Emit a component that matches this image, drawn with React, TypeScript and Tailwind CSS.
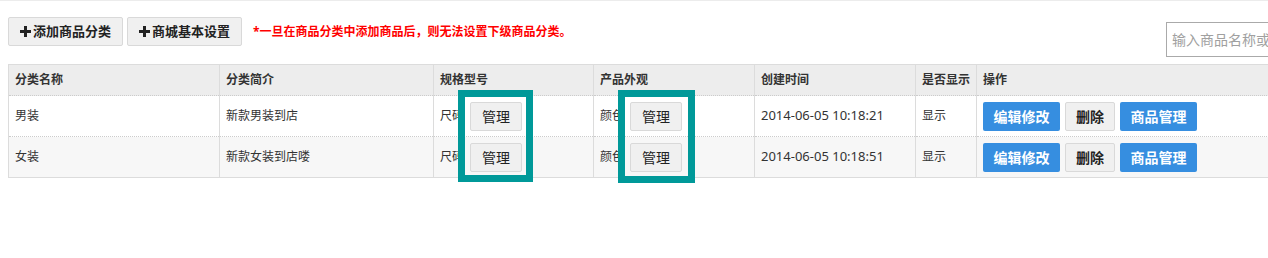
import React from 'react';

type Category = {
    name: string;
    intro: string;
    created: string;
    visible: string;
};

const rows: Category[] = [
    { name: '男装', intro: '新款男装到店', created: '2014-06-05 10:18:21', visible: '显示' },
    { name: '女装', intro: '新款女装到店喽', created: '2014-06-05 10:18:51', visible: '显示' },
];

function PlusIcon() {
    return (
        <svg width="11" height="11" viewBox="0 0 11 11" className="mr-[1px]">
            <rect x="4" y="0" width="3" height="11" fill="#222" />
            <rect x="0" y="4" width="11" height="3" fill="#222" />
        </svg>
    );
}

function GrayButton({ children, className = '' }: { children: React.ReactNode; className?: string }) {
    return (
        <button className={`h-[29px] rounded-[2px] border border-[#d9d9d9] bg-[#f0f0f0] text-[#222] ${className}`}>
            {children}
        </button>
    );
}

function BlueButton({ children }: { children: React.ReactNode }) {
    return (
        <button className="h-[29px] w-[77px] rounded-[2px] bg-[#368ee0] text-[14px] font-bold text-white">
            {children}
        </button>
    );
}

export default function App() {
    return (
        <div className="h-[258px] w-[1268px] overflow-hidden bg-white" style={{ fontFamily: "'Noto Sans', 'Noto Sans CJK SC', sans-serif" }}>
            <div className="w-[1320px]">
                <div className="h-[1px] bg-[#ececec]" />
                {/* toolbar */}
                <div className="flex items-start px-[8px] pt-[16px]">
                    <GrayButton className="flex w-[115px] items-center justify-center gap-[1px] text-[13px] font-bold">
                        <PlusIcon />添加商品分类
                    </GrayButton>
                    <GrayButton className="ml-[4px] flex w-[115px] items-center justify-center gap-[1px] text-[13px] font-bold">
                        <PlusIcon />商城基本设置
                    </GrayButton>
                    <p className="ml-[11px] text-[12px] font-bold leading-[29px] text-[#ff0000]">
                        *一旦在商品分类中添加商品后，则无法设置下级商品分类。
                    </p>
                    <input
                        className="ml-auto mt-[5px] h-[35px] w-[146px] border border-[#aaa] px-[5px] text-[14px] text-[#333] outline-none placeholder:text-[#a0a0a0]"
                        placeholder="输入商品名称或关键字"
                    />
                </div>

                {/* category table */}
                <div className="relative ml-[8px] mt-[7px] w-[1304px]">
                    <table className="w-full table-fixed border-collapse text-[12px] text-[#333]">
                        <colgroup>
                            <col className="w-[211px]" />
                            <col className="w-[214px]" />
                            <col className="w-[160px]" />
                            <col className="w-[161px]" />
                            <col className="w-[161px]" />
                            <col className="w-[61px]" />
                            <col />
                        </colgroup>
                        <thead>
                            <tr className="h-[31px] bg-[#ededed] text-left font-bold">
                                {['分类名称', '分类简介', '规格型号', '产品外观', '创建时间', '是否显示', '操作'].map((h) => (
                                    <th key={h} className="border border-b-0 border-[#dcdcdc] px-[6px] font-bold">{h}</th>
                                ))}
                            </tr>
                        </thead>
                        <tbody>
                            {rows.map((r, i) => (
                                <tr key={r.name} className={`h-[41px] border-t border-dotted border-[#ccc] ${i % 2 === 1 ? 'bg-[#f7f7f7]' : 'bg-white'}`}>
                                    <td className="border-x border-[#dcdcdc] px-[6px]">{r.name}</td>
                                    <td className="border-x border-[#dcdcdc] px-[6px]">{r.intro}</td>
                                    <td className="border-x border-[#dcdcdc] px-[6px]">
                                        <div className="flex items-center">
                                            <span>尺码</span>
                                            <GrayButton className="ml-[6px] w-[52px] text-[14px]">管理</GrayButton>
                                        </div>
                                    </td>
                                    <td className="border-x border-[#dcdcdc] px-[6px]">
                                        <div className="flex items-center">
                                            <span>颜色</span>
                                            <GrayButton className="ml-[6px] w-[52px] text-[14px]">管理</GrayButton>
                                        </div>
                                    </td>
                                    <td className="border-x border-[#dcdcdc] px-[6px] text-[13px]">{r.created}</td>
                                    <td className="border-x border-[#dcdcdc] px-[6px]">{r.visible}</td>
                                    <td className="border-x border-[#dcdcdc] px-[6px]">
                                        <div className="flex items-center gap-[5px]">
                                            <BlueButton>编辑修改</BlueButton>
                                            <GrayButton className="w-[50px] text-[14px] font-bold">删除</GrayButton>
                                            <BlueButton>商品管理</BlueButton>
                                        </div>
                                    </td>
                                </tr>
                            ))}
                            <tr className="h-0 border-t border-[#dcdcdc]" />
                        </tbody>
                    </table>

                    {/* highlight annotations */}
                    <div className="pointer-events-none absolute left-[450px] top-[26px] h-[92px] w-[75px] border-[7px] border-[#009999]" />
                    <div className="pointer-events-none absolute left-[610px] top-[26px] h-[93px] w-[77px] border-[7px] border-[#009999]" />
                </div>
            </div>
        </div>
    );
}
